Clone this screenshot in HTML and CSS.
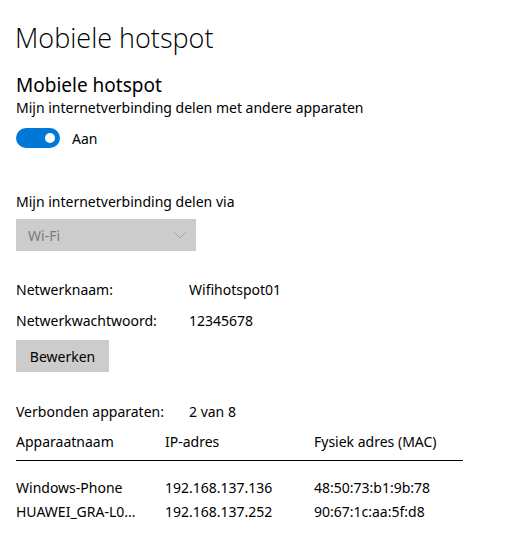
FILE: index.html
```html
<!DOCTYPE html>
<html lang="nl">
<head>
<meta charset="utf-8">
<link rel="stylesheet" href="styles.css">
</head>
<body>
<main class="page">
  <h1 class="title">Mobiele hotspot</h1>
  <h2 class="subtitle">Mobiele hotspot</h2>
  <p class="desc">Mijn internetverbinding delen met andere apparaten</p>
  <div class="toggle-row">
    <span class="toggle"><span class="knob"></span></span>
    <span class="toggle-label">Aan</span>
  </div>
  <p class="via-label">Mijn internetverbinding delen via</p>
  <div class="select">
    <span>Wi-Fi</span>
    <svg class="chev" width="12" height="7" viewBox="0 0 12 7"><path d="M0.5 0.5 L6 6 L11.5 0.5" fill="none" stroke="#a0a0a0" stroke-width="1"/></svg>
  </div>
  <div class="info">
    <div class="info-row"><span class="key">Netwerknaam:</span><span>Wifihotspot01</span></div>
    <div class="info-row"><span class="key">Netwerkwachtwoord:</span><span>12345678</span></div>
  </div>
  <button class="btn">Bewerken</button>
  <div class="info-row connected"><span class="key">Verbonden apparaten:</span><span>2 van 8</span></div>
  <div class="table">
    <div class="thead">
      <span>Apparaatnaam</span><span>IP-adres</span><span>Fysiek adres (MAC)</span>
    </div>
    <div class="trow first">
      <span>Windows-Phone</span><span>192.168.137.136</span><span>48:50:73:b1:9b:78</span>
    </div>
    <div class="trow">
      <span>HUAWEI_GRA-L0...</span><span>192.168.137.252</span><span>90:67:1c:aa:5f:d8</span>
    </div>
  </div>
</main>
</body>
</html>
```
FILE: styles.css
```css
html, body {
  margin: 0;
  padding: 0;
  background: #ffffff;
}
body {
  font-family: "Noto Sans", "Open Sans", sans-serif;
  color: #000000;
  font-size: 14px;
}
.page {
  padding: 18px 16px 0 16px;
}
.title {
  font-family: "Open Sans", "Noto Sans", sans-serif;
  font-weight: 300;
  font-size: 27px;
  line-height: 40px;
  margin: 0 0 0 -1px;
}
.subtitle {
  font-weight: 400;
  font-size: 19px;
  line-height: 26px;
  margin: 14px 0 0 0;
}
.desc {
  margin: 0;
  line-height: 20px;
}
.toggle-row {
  display: flex;
  align-items: center;
  gap: 12px;
  margin-top: 10px;
  height: 20px;
}
.toggle {
  width: 44px;
  height: 20px;
  border-radius: 10px;
  background: #0078d7;
  box-sizing: border-box;
  display: flex;
  align-items: center;
  justify-content: flex-end;
  padding-right: 5px;
}
.knob {
  width: 10px;
  height: 10px;
  border-radius: 50%;
  background: #ffffff;
}
.via-label {
  margin: 44px 0 0 0;
  line-height: 20px;
}
.select {
  width: 180px;
  height: 32px;
  background: #cccccc;
  margin-top: 7px;
  box-sizing: border-box;
  padding: 0 10px 0 12px;
  display: flex;
  align-items: center;
  justify-content: space-between;
  color: #7a7a7a;
}
.chev { display: block; }
.info {
  margin-top: 29px;
  display: flex;
  flex-direction: column;
  gap: 11px;
}
.info-row {
  display: grid;
  grid-template-columns: 173px auto;
  line-height: 20px;
}
.btn {
  display: block;
  margin-top: 9px;
  width: 93px;
  height: 32px;
  background: #cccccc;
  border: none;
  padding: 0;
  font: inherit;
  color: #000;
}
.connected {
  margin-top: 30px;
}
.table {
  width: 447px;
  margin-top: 10px;
}
.thead, .trow {
  display: grid;
  grid-template-columns: 149px 149px auto;
  line-height: 20px;
}
.thead {
  border-bottom: 1px solid #000;
  padding-bottom: 8px;
}
.trow.first { margin-top: 17px; }
.trow + .trow { margin-top: 4px; }
```
